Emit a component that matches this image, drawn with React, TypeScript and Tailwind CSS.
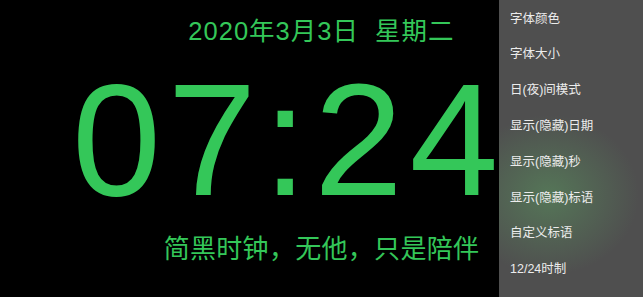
const menu = [
  '字体颜色',
  '字体大小',
  '日(夜)间模式',
  '显示(隐藏)日期',
  '显示(隐藏)秒',
  '显示(隐藏)标语',
  '自定义标语',
  '12/24时制',
];

const cjk = { fontFamily: '"Liberation Sans", "Noto Sans CJK SC", sans-serif' };

export default function App() {
  return (
    <div className="relative w-[643px] h-[297px] overflow-hidden bg-black" style={cjk}>
      {/* clock face */}
      <div className="flex flex-col items-center w-[643px] text-[#34c759]">
        <div className="mt-[14px] h-[34px] text-[25.5px] leading-[34px] tracking-[1px] whitespace-pre">2020年3月3日  星期二</div>
        <div className="mt-[17px] mr-[66px] h-[150px] text-[160px] leading-[150px] tracking-[6.5px] whitespace-nowrap">07:24</div>
        <div className="mt-[17px] text-[26px] leading-[34px] tracking-[0.3px] whitespace-nowrap">简黑时钟，无他，只是陪伴</div>
      </div>

      {/* settings drawer */}
      <div className="absolute top-0 right-0 w-[144px] h-[297px] bg-[#4f4f4f] overflow-hidden">
        <div className="absolute left-[-40px] top-[115px] w-[180px] h-[160px] rounded-full bg-[radial-gradient(closest-side,rgba(90,150,95,0.55),rgba(79,79,79,0))]" />
        <div className="relative flex flex-col pt-[1px]">
          {menu.map((m) => (
            <div key={m} className="h-[35.8px] flex items-center pl-[11px] text-[12.5px] text-[#ececec]">
              {m}
            </div>
          ))}
        </div>
      </div>
    </div>
  );
}
